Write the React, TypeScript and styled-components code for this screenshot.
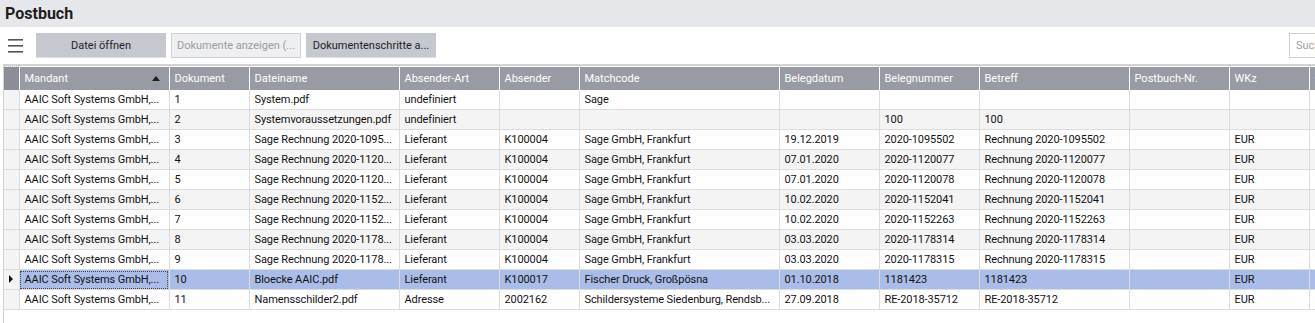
import React from 'react';
import styled, {createGlobalStyle} from "styled-components";

const GlobalStyle = createGlobalStyle`
    body {
        margin: 0;
        background: #ffffff;
        font-family: "Segoe UI", Roboto, "Liberation Sans", sans-serif;
        overflow: hidden;
    }
`

type Column = { key: string, title: string, width: number }

const columns: Column[] = [
    {key: 'mandant', title: 'Mandant', width: 150},
    {key: 'dokument', title: 'Dokument', width: 80},
    {key: 'datei', title: 'Dateiname', width: 150},
    {key: 'art', title: 'Absender-Art', width: 100},
    {key: 'absender', title: 'Absender', width: 80},
    {key: 'match', title: 'Matchcode', width: 200},
    {key: 'datum', title: 'Belegdatum', width: 100},
    {key: 'nummer', title: 'Belegnummer', width: 100},
    {key: 'betreff', title: 'Betreff', width: 150},
    {key: 'postbuch', title: 'Postbuch-Nr.', width: 100},
    {key: 'wkz', title: 'WKz', width: 80},
    {key: 'gruppe', title: 'Gruppe', width: 80},
]

const M = 'AAIC Soft Systems GmbH,...'

const rows: string[][] = [
    [M, '1', 'System.pdf', 'undefiniert', '', 'Sage', '', '', '', '', '', ''],
    [M, '2', 'Systemvoraussetzungen.pdf', 'undefiniert', '', '', '', '100', '100', '', '', ''],
    [M, '3', 'Sage Rechnung 2020-1095...', 'Lieferant', 'K100004', 'Sage GmbH, Frankfurt', '19.12.2019', '2020-1095502', 'Rechnung 2020-1095502', '', 'EUR', ''],
    [M, '4', 'Sage Rechnung 2020-1120...', 'Lieferant', 'K100004', 'Sage GmbH, Frankfurt', '07.01.2020', '2020-1120077', 'Rechnung 2020-1120077', '', 'EUR', ''],
    [M, '5', 'Sage Rechnung 2020-1120...', 'Lieferant', 'K100004', 'Sage GmbH, Frankfurt', '07.01.2020', '2020-1120078', 'Rechnung 2020-1120078', '', 'EUR', ''],
    [M, '6', 'Sage Rechnung 2020-1152...', 'Lieferant', 'K100004', 'Sage GmbH, Frankfurt', '10.02.2020', '2020-1152041', 'Rechnung 2020-1152041', '', 'EUR', ''],
    [M, '7', 'Sage Rechnung 2020-1152...', 'Lieferant', 'K100004', 'Sage GmbH, Frankfurt', '10.02.2020', '2020-1152263', 'Rechnung 2020-1152263', '', 'EUR', ''],
    [M, '8', 'Sage Rechnung 2020-1178...', 'Lieferant', 'K100004', 'Sage GmbH, Frankfurt', '03.03.2020', '2020-1178314', 'Rechnung 2020-1178314', '', 'EUR', ''],
    [M, '9', 'Sage Rechnung 2020-1178...', 'Lieferant', 'K100004', 'Sage GmbH, Frankfurt', '03.03.2020', '2020-1178315', 'Rechnung 2020-1178315', '', 'EUR', ''],
    [M, '10', 'Bloecke AAIC.pdf', 'Lieferant', 'K100017', 'Fischer Druck, Großpösna', '01.10.2018', '1181423', '1181423', '', 'EUR', ''],
    [M, '11', 'Namensschilder2.pdf', 'Adresse', '2002162', 'Schildersysteme Siedenburg, Rendsb...', '27.09.2018', 'RE-2018-35712', 'RE-2018-35712', '', 'EUR', ''],
]

const SELECTED = 9

export default function App() {
    return (
        <Page>
            <GlobalStyle/>
            <TitleBar>Postbuch</TitleBar>

            <Toolbar>
                <MenuButton aria-label="Menü">
                    <svg width="15" height="14" viewBox="0 0 15 14">
                        <rect x="0" y="0" width="15" height="1.6" fill="#555"/>
                        <rect x="0" y="6" width="15" height="1.6" fill="#555"/>
                        <rect x="0" y="12" width="15" height="1.6" fill="#555"/>
                    </svg>
                </MenuButton>
                <ToolButton>Datei öffnen</ToolButton>
                <ToolButton disabled>Dokumente anzeigen (...</ToolButton>
                <ToolButton>Dokumentenschritte a...</ToolButton>
                <Spacer/>
                <Search placeholder="Suchen"/>
            </Toolbar>

            <GridWrap>
                <Grid>
                    <colgroup>
                        <col style={{width: 15}}/>
                        {columns.map(c => <col key={c.key} style={{width: c.width}}/>)}
                    </colgroup>
                    <thead>
                    <tr>
                        <Corner/>
                        {columns.map((c, i) => (
                            <HeadCell key={c.key}>
                                <HeadInner>
                                    <span>{c.title}</span>
                                    {i === 0 && <SortArrow/>}
                                </HeadInner>
                            </HeadCell>
                        ))}
                    </tr>
                    </thead>
                    <tbody>
                    {rows.map((r, ri) => (
                        <Row key={ri} $alt={ri % 2 === 1} $selected={ri === SELECTED}>
                            <Indicator>{ri === SELECTED && <Pointer/>}</Indicator>
                            {r.map((v, ci) => (
                                <Cell key={ci} $focus={ri === SELECTED && ci === 0}>{v}</Cell>
                            ))}
                        </Row>
                    ))}
                    </tbody>
                </Grid>
            </GridWrap>
        </Page>
    );
}

const Page = styled.div`
    width: 1315px;
    height: 323px;
    overflow: hidden;
    background: #ffffff;
    color: #111111;
    font-size: 11px;
`

const TitleBar = styled.div`
    height: 27px;
    background: #e6e7eb;
    padding-left: 5px;
    font-size: 16px;
    font-weight: 700;
    line-height: 28px;
    color: #1e1e1e;
`

const Toolbar = styled.div`
    display: flex;
    align-items: center;
    height: 37px;
    padding: 0 0 0 8px;
    gap: 5px;
`

const MenuButton = styled.div`
    display: flex;
    align-items: center;
    width: 23px;
    height: 24px;
`

const ToolButton = styled.button`
    width: 130px;
    height: 25px;
    padding: 0 2px;
    border: 1px solid #c5c8cf;
    border-bottom-color: #e2e3e6;
    background: #c5c8cf;
    color: #1e1e1e;
    font-family: inherit;
    font-size: 11px;
    white-space: nowrap;
    overflow: hidden;

    &:disabled {
        background: #eeeff1;
        border-color: #cfd1d6;
        color: #9a9ca2;
    }
`

const Spacer = styled.div`
    flex: 1;
`

const Search = styled.input`
    width: 60px;
    height: 25px;
    box-sizing: border-box;
    margin-right: -34px;
    border: 1px solid #cfcfcf;
    padding: 0 6px;
    font-family: inherit;
    font-size: 11px;

    &::placeholder {
        color: #a0a0a0;
    }
`

const GridWrap = styled.div`
    margin-left: 3px;
    border-left: 1px solid #d3d3d3;
    border-top: 2px solid #d3d3d3;
    height: 300px;
`

const Grid = styled.table`
    table-layout: fixed;
    border-collapse: collapse;
    width: 1375px;
`

const Corner = styled.th`
    height: 23px;
    padding: 0;
    background: #8b8e96;
    border-right: 1px solid #ffffff;
    border-top: 1px dotted #c8cacf;
`

const HeadCell = styled.th`
    height: 23px;
    padding: 0 5px;
    background: #989ba3;
    color: #ffffff;
    font-weight: 400;
    text-align: left;
    border-right: 1px solid #ffffff;
    white-space: nowrap;
    overflow: hidden;
`

const HeadInner = styled.div`
    display: flex;
    align-items: center;
    justify-content: space-between;
`

const SortArrow = styled.span`
    width: 0;
    height: 0;
    margin-right: 4px;
    border-left: 4px solid transparent;
    border-right: 4px solid transparent;
    border-bottom: 5px solid #1e1e1e;
`

const Row = styled.tr<{ $alt: boolean, $selected: boolean }>`
    background: ${p => p.$selected ? '#aabde8' : p.$alt ? '#f4f4f4' : '#ffffff'};
`

const Indicator = styled.td`
    height: 19px;
    padding: 0;
    border-right: 1px solid #dcdcdc;
    border-bottom: 1px solid #dcdcdc;
    background: #f4f4f4;
    text-align: center;
`

const Pointer = styled.span`
    display: inline-block;
    width: 0;
    height: 0;
    border-top: 4px solid transparent;
    border-bottom: 4px solid transparent;
    border-left: 4px solid #111;
`

const Cell = styled.td<{ $focus: boolean }>`
    height: 19px;
    padding: 0 4px 0 5px;
    border-right: 1px solid #dcdcdc;
    border-bottom: 1px solid #dcdcdc;
    letter-spacing: -0.1px;
    white-space: nowrap;
    overflow: hidden;
    text-overflow: ellipsis;
    outline: ${p => p.$focus ? '1px dotted #444' : 'none'};
    outline-offset: -2px;
`
